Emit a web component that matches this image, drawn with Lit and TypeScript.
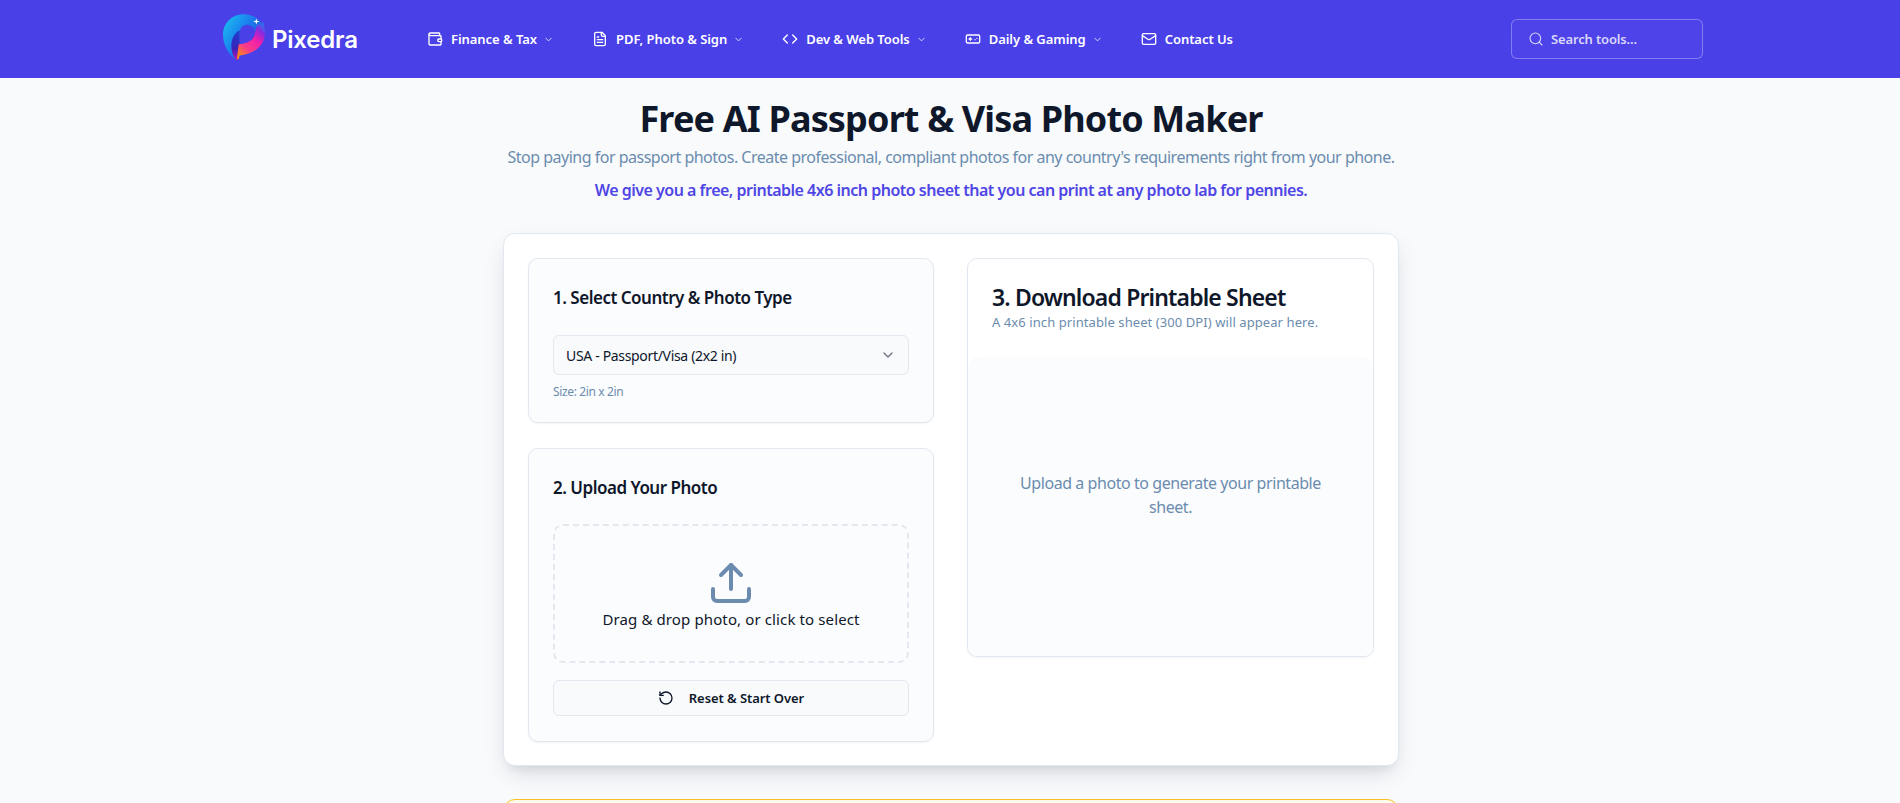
import { LitElement, html, css, svg } from "lit";
import { customElement } from "lit/decorators.js";

const icon = (body: unknown, size = 16, stroke = 2) => html`<svg
  width=${size}
  height=${size}
  viewBox="0 0 24 24"
  fill="none"
  stroke="currentColor"
  stroke-width=${stroke}
  stroke-linecap="round"
  stroke-linejoin="round"
>${body}</svg>`;

const icons = {
  wallet: svg`<path d="M19 7V4a1 1 0 0 0-1-1H5a2 2 0 0 0 0 4h15a1 1 0 0 1 1 1v4h-3a2 2 0 0 0 0 4h3a1 1 0 0 0 1-1v-2a1 1 0 0 0-1-1"/><path d="M3 5v14a2 2 0 0 0 2 2h15a1 1 0 0 0 1-1v-4"/>`,
  file: svg`<path d="M15 2H6a2 2 0 0 0-2 2v16a2 2 0 0 0 2 2h12a2 2 0 0 0 2-2V7Z"/><path d="M14 2v4a2 2 0 0 0 2 2h4"/><path d="M10 9H8"/><path d="M16 13H8"/><path d="M16 17H8"/>`,
  code: svg`<path d="m16 18 6-6-6-6"/><path d="m8 6-6 6 6 6"/>`,
  gamepad: svg`<line x1="6" x2="10" y1="12" y2="12"/><line x1="8" x2="8" y1="10" y2="14"/><line x1="15" x2="15.01" y1="13" y2="13"/><line x1="18" x2="18.01" y1="11" y2="11"/><rect width="20" height="12" x="2" y="6" rx="2"/>`,
  mail: svg`<rect width="20" height="16" x="2" y="4" rx="2"/><path d="m22 7-8.97 5.7a1.94 1.94 0 0 1-2.06 0L2 7"/>`,
  search: svg`<circle cx="11" cy="11" r="8"/><path d="m21 21-4.3-4.3"/>`,
  chevron: svg`<path d="m6 9 6 6 6-6"/>`,
  upload: svg`<path d="M21 15v4a2 2 0 0 1-2 2H5a2 2 0 0 1-2-2v-4"/><path d="m17 8-5-5-5 5"/><path d="M12 3v12"/>`,
  reset: svg`<path d="M3 12a9 9 0 1 0 9-9 9.75 9.75 0 0 0-6.74 2.74L3 8"/><path d="M3 3v5h5"/>`,
};

const navItems = [
  { label: "Finance & Tax", icon: icons.wallet, menu: true },
  { label: "PDF, Photo & Sign", icon: icons.file, menu: true },
  { label: "Dev & Web Tools", icon: icons.code, menu: true },
  { label: "Daily & Gaming", icon: icons.gamepad, menu: true },
  { label: "Contact Us", icon: icons.mail, menu: false },
];

@customElement("app-root")
export class AppRoot extends LitElement {
  static styles = css`
    :host {
      display: block;
      height: 100vh;
      overflow: hidden;
      background: #f8fafc;
      color: #0f172a;
      font-family: "Noto Sans", "Open Sans", sans-serif;
    }
    * {
      box-sizing: border-box;
    }

    header {
      display: flex;
      align-items: center;
      height: 78px;
      padding: 0 197px 0 223px;
      background: #4a40e8;
      color: #fff;
    }
    .brand {
      display: flex;
      align-items: center;
      gap: 7px;
      width: 204px;
      font-family: Inter, sans-serif;
      font-size: 24px;
      font-weight: 600;
      letter-spacing: -0.2px;
    }
    .brand svg {
      margin-top: -3px;
    }
    nav {
      display: flex;
      gap: 38px;
    }
    .nav-item {
      display: flex;
      align-items: center;
      gap: 8px;
      font-size: 13px;
      font-weight: 600;
      letter-spacing: -0.05px;
    }
    .nav-item .chev {
      display: flex;
      margin-left: -2px;
      opacity: 0.85;
    }
    .search {
      display: flex;
      align-items: center;
      gap: 7px;
      width: 192px;
      height: 40px;
      margin-left: auto;
      padding-left: 16px;
      border: 1px solid rgba(255, 255, 255, 0.3);
      border-radius: 6px;
      background: rgba(255, 255, 255, 0.02);
      color: #d9d7fb;
      font-size: 13px;
      font-weight: 600;
      letter-spacing: -0.15px;
    }

    main {
      width: 896px;
      margin: 0 0 0 503px;
    }
    .intro {
      padding-top: 18px;
      height: 155px;
      text-align: center;
    }
    h1 {
      margin: 0;
      font-size: 36px;
      line-height: 46px;
      font-weight: 700;
      letter-spacing: -0.85px;
    }
    .lead {
      margin: 3px 0 0;
      font-size: 16px;
      line-height: 24px;
      color: #6b8cae;
      letter-spacing: -0.5px;
      white-space: nowrap;
    }
    .promo {
      margin: 10px 0 0;
      font-size: 16px;
      line-height: 22px;
      font-weight: 600;
      color: #4f46e5;
      letter-spacing: -0.5px;
    }

    .tool {
      display: grid;
      grid-template-columns: 406px 407px;
      justify-content: space-between;
      align-items: start;
      height: 533px;
      padding: 24px;
      background: #fff;
      border: 1px solid #e2e8f0;
      border-radius: 12px;
      box-shadow: 0 10px 25px -5px rgba(15, 23, 42, 0.15),
        0 8px 10px -6px rgba(15, 23, 42, 0.08);
    }
    .steps {
      display: flex;
      flex-direction: column;
      gap: 25px;
    }
    .step {
      padding: 25px 24px 24px;
      background: #fbfcfe;
      border: 1px solid #e2e8f0;
      border-radius: 10px;
      box-shadow: 0 1px 2px rgba(15, 23, 42, 0.05);
    }
    .step.one {
      height: 165px;
    }
    .step.two {
      height: 294px;
    }
    h2 {
      margin: 0;
      font-size: 17px;
      line-height: 28px;
      font-weight: 600;
      letter-spacing: -0.5px;
    }
    .select {
      display: flex;
      align-items: center;
      justify-content: space-between;
      height: 40px;
      margin-top: 23px;
      padding: 0 12px;
      background: #f8fafc;
      border: 1px solid #e2e8f0;
      border-radius: 6px;
      font-size: 14px;
      letter-spacing: -0.33px;
    }
    .select .chev {
      display: flex;
      color: #6b7280;
    }
    .hint {
      margin: 9px 0 0;
      font-size: 12px;
      line-height: 16px;
      color: #6b8cae;
      letter-spacing: -0.36px;
    }
    .drop {
      display: flex;
      flex-direction: column;
      align-items: center;
      justify-content: center;
      gap: 2px;
      height: 139px;
      margin-top: 22px;
      border: 2px dashed #e2e8f0;
      border-radius: 10px;
      font-size: 15px;
      letter-spacing: 0.12px;
    }
    .drop svg {
      color: #6b8cae;
      margin: 0 0 0 -1px;
    }
    .reset {
      display: flex;
      align-items: center;
      justify-content: center;
      gap: 15px;
      height: 36px;
      margin-top: 17px;
      background: #f8fafc;
      border: 1px solid #e2e8f0;
      border-radius: 6px;
      font-size: 13px;
      font-weight: 600;
      letter-spacing: -0.07px;
    }

    .result {
      height: 399px;
      border: 1px solid #e2e8f0;
      border-radius: 10px;
      overflow: hidden;
      display: flex;
      flex-direction: column;
      box-shadow: 0 1px 2px rgba(15, 23, 42, 0.05);
    }
    .result-head {
      height: 98px;
      padding: 24px 24px 0;
    }
    .result-head h3 {
      margin: 0;
      font-size: 23px;
      line-height: 28px;
      font-weight: 600;
      letter-spacing: -0.85px;
    }
    .result-head p {
      margin: 2px 0 0;
      font-size: 13px;
      line-height: 18px;
      color: #6b8cae;
      letter-spacing: 0.08px;
    }
    .preview {
      flex: 1;
      display: flex;
      align-items: center;
      justify-content: center;
      padding: 0 40px 24px;
      background: #fbfcfe;
      border-radius: 10px 10px 0 0;
      text-align: center;
      font-size: 16px;
      line-height: 24px;
      color: #6b8cae;
      letter-spacing: -0.44px;
    }
    .notice {
      height: 60px;
      margin-top: 33px;
      background: #fffbeb;
      border: 1px solid #fbbf24;
      border-radius: 12px;
    }
  `;

  private logo() {
    return html`<svg width="42" height="47" viewBox="0 0 126 140">
      <defs>
        <linearGradient id="lg-blue" x1="0" y1="0" x2="0.9" y2="0.6">
          <stop offset="0" stop-color="#1ac6ee" />
          <stop offset="0.5" stop-color="#1a86ee" />
          <stop offset="1" stop-color="#1c50e0" />
        </linearGradient>
        <linearGradient id="lg-stem" x1="0.5" y1="0" x2="0.5" y2="1">
          <stop offset="0" stop-color="#1c3fd0" />
          <stop offset="0.6" stop-color="#3a22b8" />
          <stop offset="1" stop-color="#c015b4" />
        </linearGradient>
        <linearGradient id="lg-pink" x1="0.9" y1="0" x2="0.25" y2="1">
          <stop offset="0" stop-color="#1c7cee" />
          <stop offset="0.2" stop-color="#8a2ade" />
          <stop offset="0.42" stop-color="#ee1fae" />
          <stop offset="0.75" stop-color="#fb3c86" />
          <stop offset="1" stop-color="#fc8a16" />
        </linearGradient>
      </defs>
      <path
        d="M41 138C18 124 0 94 0 62 0 25 28 0 62 0c36 0 64 27 64 60 0 32-30 58-76 64l-4 12z"
        fill="url(#lg-blue)"
      />
      <path
        d="M50 48V124l-4 12-5 2C30 128 25 112 25 94c0-22 10-38 25-46z"
        fill="url(#lg-stem)"
      />
      <path
        d="M120 24c4 10 6 21 6 32 1 36-30 62-76 68l-4 12-4-2 5-44c24-2 46-18 51-42 2-10 3-18 22-24z"
        fill="url(#lg-pink)"
      />
      <path
        d="M50 90V58c0-14 9-26 22-26 13 0 24 11 24 24 0 16-16 32-46 34z"
        fill="#4a40e8"
      />
      <path d="M100 12l2 8 8 2-8 2-2 8-2-8-8-2 8-2z" fill="#fff" />
    </svg>`;
  }

  render() {
    return html`
      <header>
        <div class="brand">${this.logo()}<span>Pixedra</span></div>
        <nav>
          ${navItems.map(
            (item) => html`<div class="nav-item">
              ${icon(item.icon)}
              <span>${item.label}</span>
              ${item.menu
                ? html`<span class="chev">${icon(icons.chevron, 11)}</span>`
                : ""}
            </div>`
          )}
        </nav>
        <div class="search">
          ${icon(icons.search, 16, 1.6)}<span>Search tools...</span>
        </div>
      </header>
      <main>
        <div class="intro">
          <h1>Free AI Passport &amp; Visa Photo Maker</h1>
          <p class="lead">
            Stop paying for passport photos. Create professional, compliant
            photos for any country's requirements right from your phone.
          </p>
          <p class="promo">
            We give you a free, printable 4x6 inch photo sheet that you can
            print at any photo lab for pennies.
          </p>
        </div>
        <section class="tool">
          <div class="steps">
            <div class="step one">
              <h2>1. Select Country &amp; Photo Type</h2>
              <div class="select">
                <span>USA - Passport/Visa (2x2 in)</span>
                <span class="chev">${icon(icons.chevron, 16)}</span>
              </div>
              <p class="hint">Size: 2in x 2in</p>
            </div>
            <div class="step two">
              <h2>2. Upload Your Photo</h2>
              <div class="drop">
                ${icon(icons.upload, 48)}
                <span>Drag &amp; drop photo, or click to select</span>
              </div>
              <div class="reset">
                ${icon(icons.reset, 16)}<span>Reset &amp; Start Over</span>
              </div>
            </div>
          </div>
          <div class="result">
            <div class="result-head">
              <h3>3. Download Printable Sheet</h3>
              <p>A 4x6 inch printable sheet (300 DPI) will appear here.</p>
            </div>
            <div class="preview">Upload a photo to generate your printable sheet.</div>
          </div>
        </section>
        <div class="notice"></div>
      </main>
    `;
  }
}
